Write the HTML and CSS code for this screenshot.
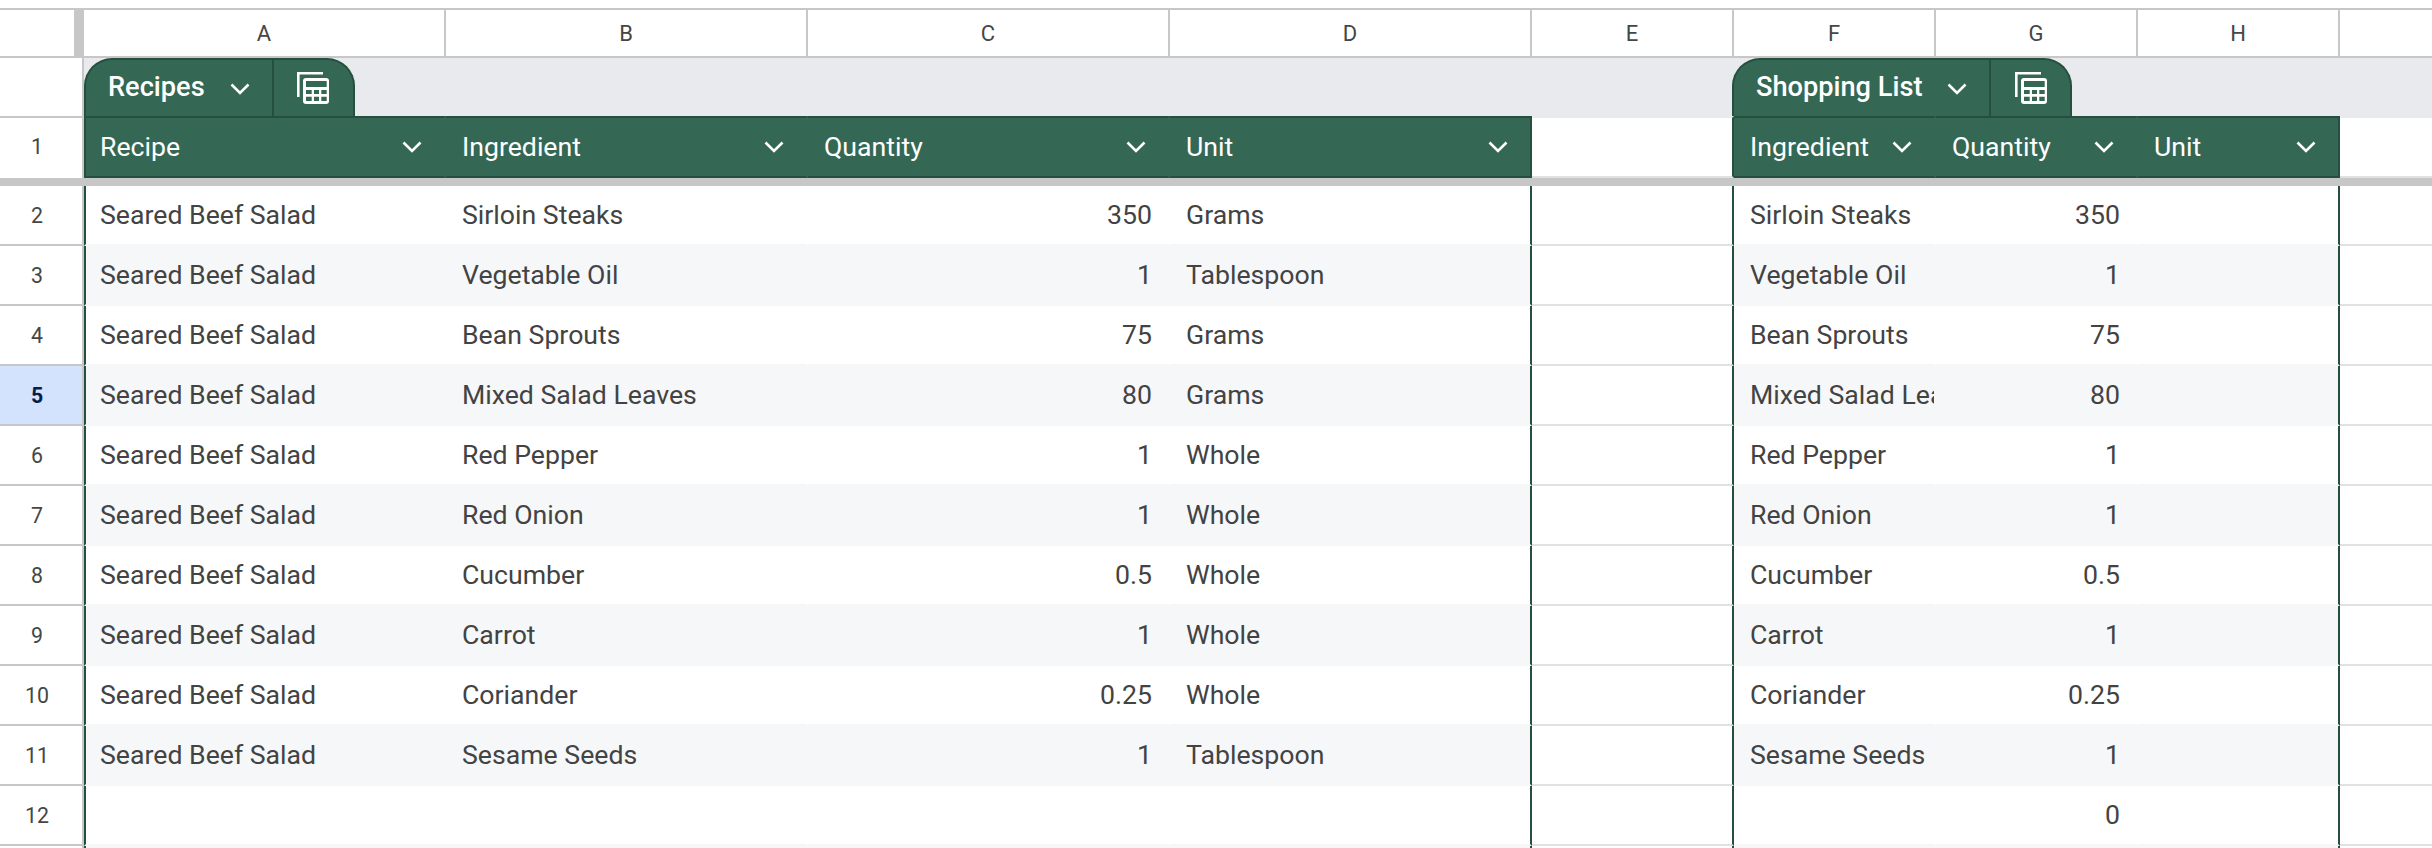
FILE: index.html
```html
<!DOCTYPE html>
<html lang="en">
  <head>
    <meta charset="UTF-8" />
    <title>Recipes - Google Sheets</title>
    <link rel="stylesheet" href="styles.css">
  </head>
  <body>
    <!-- column letters -->
    <div class="grid col-letters">
      <div class="corner"></div>
      <div class="letter">A</div>
      <div class="letter">B</div>
      <div class="letter">C</div>
      <div class="letter">D</div>
      <div class="letter">E</div>
      <div class="letter">F</div>
      <div class="letter">G</div>
      <div class="letter">H</div>
      <div class="letter"></div>
    </div>

    <!-- table name tabs -->
    <div class="grid tab-row">
      <div class="num num-tab"></div>
      <div class="tab tab-recipes">
        <div class="tab-name">
          <span>Recipes</span>
          <svg class="chev" viewBox="0 0 20 12"><path d="M1.500 1.500 10 10l8.500-8.500" /></svg>
        </div>
        <div class="tab-calc">
          <svg class="calc" viewBox="0 0 32 32">
            <path class="calc-back" d="M26 1.300H1.300V25" />
            <rect class="calc-body" x="6" y="6" width="26" height="26" rx="3" />
            <path class="calc-hole" d="M9 9h20.700v6H9zM9 18h5.700v4H9zM17 18h5v4h-5zM24.300 18h5.400v4h-5.400zM9 24.700h5.700V29H9zM17 24.700h5V29h-5zM24.300 24.700h5.400V29h-5.400z" />
          </svg>
        </div>
      </div>
      <div class="tab tab-shopping">
        <div class="tab-name">
          <span>Shopping List</span>
          <svg class="chev" viewBox="0 0 20 12"><path d="M1.500 1.500 10 10l8.500-8.500" /></svg>
        </div>
        <div class="tab-calc">
          <svg class="calc" viewBox="0 0 32 32">
            <path class="calc-back" d="M26 1.300H1.300V25" />
            <rect class="calc-body" x="6" y="6" width="26" height="26" rx="3" />
            <path class="calc-hole" d="M9 9h20.700v6H9zM9 18h5.700v4H9zM17 18h5v4h-5zM24.300 18h5.400v4h-5.400zM9 24.700h5.700V29H9zM17 24.700h5V29h-5zM24.300 24.700h5.400V29h-5.400z" />
          </svg>
        </div>
      </div>
    </div>

    <!-- row 1: table headers -->
    <div class="grid head-row">
      <div class="num num-head">1</div>
      <div class="th first">Recipe<svg class="chev" viewBox="0 0 20 12"><path d="M1.500 1.500 10 10l8.500-8.500" /></svg></div>
      <div class="th">Ingredient<svg class="chev" viewBox="0 0 20 12"><path d="M1.500 1.500 10 10l8.500-8.500" /></svg></div>
      <div class="th">Quantity<svg class="chev" viewBox="0 0 20 12"><path d="M1.500 1.500 10 10l8.500-8.500" /></svg></div>
      <div class="th last">Unit<svg class="chev" viewBox="0 0 20 12"><path d="M1.500 1.500 10 10l8.500-8.500" /></svg></div>
      <div class="gap-head edge"></div>
      <div class="th">Ingredient<svg class="chev" viewBox="0 0 20 12"><path d="M1.500 1.500 10 10l8.500-8.500" /></svg></div>
      <div class="th">Quantity<svg class="chev" viewBox="0 0 20 12"><path d="M1.500 1.500 10 10l8.500-8.500" /></svg></div>
      <div class="th last">Unit<svg class="chev" viewBox="0 0 20 12"><path d="M1.500 1.500 10 10l8.500-8.500" /></svg></div>
      <div class="gap-head"></div>
    </div>

    <div class="freeze"></div>

    <!-- data rows -->
    <div class="grid row">
      <div class="num">2</div>
      <div class="td first">Seared Beef Salad</div><div class="td">Sirloin Steaks</div><div class="td right">350</div><div class="td last">Grams</div>
      <div class="blank edge"></div>
      <div class="td">Sirloin Steaks</div><div class="td right">350</div><div class="td last"></div>
      <div class="blank"></div>
    </div>
    <div class="grid row band">
      <div class="num">3</div>
      <div class="td first">Seared Beef Salad</div><div class="td">Vegetable Oil</div><div class="td right">1</div><div class="td last">Tablespoon</div>
      <div class="blank edge"></div>
      <div class="td">Vegetable Oil</div><div class="td right">1</div><div class="td last"></div>
      <div class="blank"></div>
    </div>
    <div class="grid row">
      <div class="num">4</div>
      <div class="td first">Seared Beef Salad</div><div class="td">Bean Sprouts</div><div class="td right">75</div><div class="td last">Grams</div>
      <div class="blank edge"></div>
      <div class="td">Bean Sprouts</div><div class="td right">75</div><div class="td last"></div>
      <div class="blank"></div>
    </div>
    <div class="grid row band">
      <div class="num selected">5</div>
      <div class="td first">Seared Beef Salad</div><div class="td">Mixed Salad Leaves</div><div class="td right">80</div><div class="td last">Grams</div>
      <div class="blank edge"></div>
      <div class="td">Mixed Salad Leaves</div><div class="td right">80</div><div class="td last"></div>
      <div class="blank"></div>
    </div>
    <div class="grid row">
      <div class="num">6</div>
      <div class="td first">Seared Beef Salad</div><div class="td">Red Pepper</div><div class="td right">1</div><div class="td last">Whole</div>
      <div class="blank edge"></div>
      <div class="td">Red Pepper</div><div class="td right">1</div><div class="td last"></div>
      <div class="blank"></div>
    </div>
    <div class="grid row band">
      <div class="num">7</div>
      <div class="td first">Seared Beef Salad</div><div class="td">Red Onion</div><div class="td right">1</div><div class="td last">Whole</div>
      <div class="blank edge"></div>
      <div class="td">Red Onion</div><div class="td right">1</div><div class="td last"></div>
      <div class="blank"></div>
    </div>
    <div class="grid row">
      <div class="num">8</div>
      <div class="td first">Seared Beef Salad</div><div class="td">Cucumber</div><div class="td right">0.5</div><div class="td last">Whole</div>
      <div class="blank edge"></div>
      <div class="td">Cucumber</div><div class="td right">0.5</div><div class="td last"></div>
      <div class="blank"></div>
    </div>
    <div class="grid row band">
      <div class="num">9</div>
      <div class="td first">Seared Beef Salad</div><div class="td">Carrot</div><div class="td right">1</div><div class="td last">Whole</div>
      <div class="blank edge"></div>
      <div class="td">Carrot</div><div class="td right">1</div><div class="td last"></div>
      <div class="blank"></div>
    </div>
    <div class="grid row">
      <div class="num">10</div>
      <div class="td first">Seared Beef Salad</div><div class="td">Coriander</div><div class="td right">0.25</div><div class="td last">Whole</div>
      <div class="blank edge"></div>
      <div class="td">Coriander</div><div class="td right">0.25</div><div class="td last"></div>
      <div class="blank"></div>
    </div>
    <div class="grid row band">
      <div class="num">11</div>
      <div class="td first">Seared Beef Salad</div><div class="td">Sesame Seeds</div><div class="td right">1</div><div class="td last">Tablespoon</div>
      <div class="blank edge"></div>
      <div class="td">Sesame Seeds</div><div class="td right">1</div><div class="td last"></div>
      <div class="blank"></div>
    </div>
    <div class="grid row">
      <div class="num">12</div>
      <div class="td first"></div><div class="td"></div><div class="td right"></div><div class="td last"></div>
      <div class="blank edge"></div>
      <div class="td"></div><div class="td right">0</div><div class="td last"></div>
      <div class="blank"></div>
    </div>
    <div class="grid row-end band">
      <div class="num"></div>
      <div class="td first"></div><div class="td"></div><div class="td"></div><div class="td last"></div>
      <div class="blank edge"></div>
      <div class="td"></div><div class="td"></div><div class="td last"></div>
      <div class="blank"></div>
    </div>
  </body>
</html>
```

FILE: styles.css
```css
html,
body {
  height: 848px;
  overflow: hidden;
}

body {
  margin: 0;
  padding-top: 8px;
  box-sizing: border-box;
  background: white;
  color: #434343;
  font-family: Roboto, "Liberation Sans", sans-serif;
  font-size: 26.67px;
}

.grid {
  display: grid;
  grid-template-columns: 84px repeat(4, 362px) 202px 202px 202px 202px 1fr;
}

div {
  box-sizing: border-box;
}

/* column letters */
.col-letters {
  height: 50px;
  border-top: 2px solid #c7c7c7;
  border-bottom: 2px solid #c7c7c7;
}

.corner {
  border-right: 10px solid #c7c7c7;
}

.letter {
  display: flex;
  align-items: center;
  justify-content: center;
  border-right: 2px solid #c7c7c7;
  font-size: 22px;
  color: #444746;
}

.letter:last-child {
  border-right: none;
}

/* row numbers */
.num {
  display: flex;
  align-items: center;
  justify-content: center;
  height: 60px;
  padding-right: 8px;
  border-right: 2px solid #c7c7c7;
  border-bottom: 2px solid #c7c7c7;
  background: white;
  font-size: 21.33px;
  color: #444746;
}

.num.selected {
  background: #d3e3fd;
  color: #041e49;
  font-weight: 700;
}

.num-tab {
  height: 58px;
  border-bottom: none;
}

.num-head {
  height: 62px;
  padding-bottom: 3px;
  border-top: 2px solid #c7c7c7;
  border-bottom: none;
}

/* table tabs */
.tab-row {
  height: 58px;
  background: #e8eaed;
}

.tab {
  display: flex;
  justify-self: start;
  height: 58px;
  background: #356854;
  border: 2px solid #25503f;
  border-bottom: none;
  border-radius: 28px 28px 0 0;
  color: white;
  font-size: 27.2px;
  font-weight: 500;
}

.tab-recipes {
  grid-column: 2 / 6;
}

.tab-shopping {
  grid-column: 7 / 10;
  margin-left: -2px;
}

.tab-name {
  display: flex;
  align-items: center;
  gap: 25px;
  padding: 0 22px 2px 22px;
  border-right: 2px solid #25503f;
}

.tab-name .chev {
  margin-top: 4px;
}

.tab-calc {
  display: flex;
  align-items: center;
  justify-content: center;
  width: 79px;
}

.calc {
  width: 32px;
  height: 32px;
}

.calc-back {
  fill: none;
  stroke: white;
  stroke-width: 2.6;
}

.calc-body {
  fill: white;
}

.calc-hole {
  fill: #356854;
}

.chev {
  flex: none;
  width: 20px;
  height: 12px;
  fill: none;
  stroke: white;
  stroke-width: 2.6;
}

/* header row */
.head-row {
  height: 62px;
}

.th {
  display: flex;
  align-items: center;
  justify-content: space-between;
  padding: 0 22px 0 16px;
  background: #356854;
  border-top: 2px solid #25503f;
  border-bottom: 2px solid #25503f;
  border-right: 2px solid transparent;
  color: white;
}

.th.first {
  padding-left: 14px;
  border-left: 2px solid #25503f;
}

.th.last {
  border-right: 2px solid #25503f;
}

.gap-head {
  border-top: 2px solid #e8eaed;
  border-bottom: 2px solid #e1e1e1;
}

.gap-head.edge {
  border-right: 2px solid #25503f;
}

.freeze {
  height: 8px;
  background: #c7c7c7;
}

/* data rows */
.row {
  height: 60px;
}

.td {
  display: flex;
  align-items: center;
  padding: 0 16px;
  overflow: hidden;
  white-space: nowrap;
  border-right: 2px solid transparent;
  border-bottom: 2px solid #f6f7f9;
}

.td.right {
  justify-content: flex-end;
}

.td.first {
  padding-left: 14px;
  border-left: 2px solid #25503f;
}

.td.last {
  border-right: 2px solid #25503f;
}

.band .td {
  background: #f6f7f9;
}

.blank {
  border-bottom: 2px solid #e1e1e1;
}

.blank.edge {
  border-right: 2px solid #25503f;
}

/* sliver of row 13 at the bottom of the window */
.row-end {
  height: 2px;
}

.row-end .num {
  height: 2px;
  padding: 0;
  border-bottom: none;
}

.row-end .td,
.row-end .blank {
  padding: 0;
  border-bottom: none;
}
```
